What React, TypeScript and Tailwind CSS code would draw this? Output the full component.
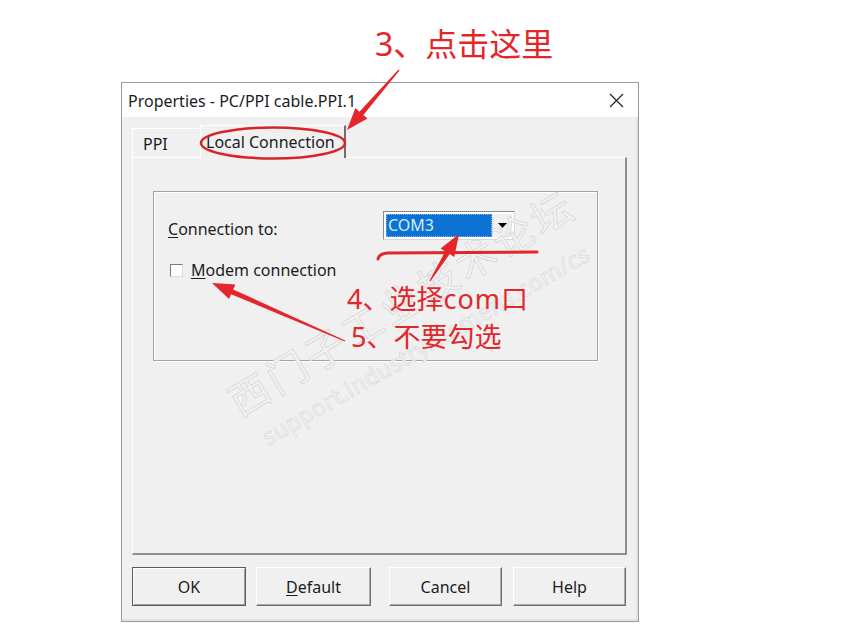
import React from 'react'

// 红色箭头：从尾部到箭头尖端，尾部细、靠近箭头处粗
function arrowPoints(tx: number, ty: number, hx: number, hy: number) {
  const len = Math.hypot(hx - tx, hy - ty)
  const dx = (hx - tx) / len
  const dy = (hy - ty) / len
  const nx = -dy
  const ny = dx
  const headLen = 22
  const bx = hx - dx * headLen
  const by = hy - dy * headLen
  const p = (x: number, y: number) => `${x.toFixed(1)},${y.toFixed(1)}`
  return [
    p(tx + nx * 0.6, ty + ny * 0.6),
    p(bx + nx * 2.6, by + ny * 2.6),
    p(bx + nx * 8, by + ny * 8),
    p(hx, hy),
    p(bx - nx * 8, by - ny * 8),
    p(bx - nx * 2.6, by - ny * 2.6),
    p(tx - nx * 0.6, ty - ny * 0.6),
  ].join(' ')
}

const RED = '#e3262b'

function Annotations() {
  return (
    <div className="absolute inset-0 z-20 pointer-events-none">
      <svg width="850" height="641" className="absolute left-0 top-0">
        {/* 水印 */}
        <g transform="rotate(-31 240 418)" fill="#f3f3f3" stroke="#d8d8d8" strokeWidth="0.8">
          <text x="240" y="418" fontSize="40" fontFamily="'Noto Sans CJK SC', sans-serif" letterSpacing="4">
            西门子工业技术论坛
          </text>
        </g>
        <g transform="rotate(-30 268 446)" fill="#f5f5f5" stroke="#dadada" strokeWidth="0.7">
          <text x="268" y="446" fontSize="23" fontFamily="'Noto Sans', sans-serif" letterSpacing="0.5">
            support.industry.siemens.com/cs
          </text>
        </g>

        {/* 椭圆圈 Local Connection */}
        <ellipse cx="273" cy="143" rx="72" ry="15.5" fill="none" stroke="#d8232a" strokeWidth="2.5" />

        {/* 下拉框下方的红线 */}
        <path d="M378 259 Q379 253.5 388 253 L537 252" fill="none" stroke={RED} strokeWidth="3" strokeLinecap="round" />

        <polygon points={arrowPoints(399, 70, 347, 130)} fill={RED} />
        <polygon points={arrowPoints(430, 281, 459, 234)} fill={RED} />
        <polygon points={arrowPoints(345, 341, 212, 283)} fill={RED} />
      </svg>

      <div
        className="absolute left-[375px] top-[28px] text-[32px] leading-none whitespace-nowrap"
        style={{ color: RED, fontFamily: "'Noto Sans', 'Noto Sans CJK SC', sans-serif" }}
      >
        3、点击这里
      </div>
      <div
        className="absolute left-[347px] top-[285px] text-[27px] leading-none whitespace-nowrap"
        style={{ color: RED, fontFamily: "'Noto Sans', 'Noto Sans CJK SC', sans-serif" }}
      >
        4、选择<span className="tracking-[1px]">com</span>口
      </div>
      <div
        className="absolute left-[351px] top-[323px] text-[27px] leading-none whitespace-nowrap"
        style={{ color: RED, fontFamily: "'Noto Sans', 'Noto Sans CJK SC', sans-serif" }}
      >
        5、不要勾选
      </div>
    </div>
  )
}

function Button({ children, wide, isDefault }: { children: React.ReactNode; wide: string; isDefault?: boolean }) {
  return (
    <div
      className={`${wide} h-[39px] flex items-center justify-center bg-[#f0f0f0] ${
        isDefault
          ? 'border border-[#5a5a5a] shadow-[inset_1px_1px_0_#ffffff,inset_-1px_-1px_0_#a0a0a0]'
          : 'border-t border-l border-white border-r border-b border-r-[#6f6f6f] border-b-[#6f6f6f] shadow-[inset_-1px_-1px_0_#a9a9a9]'
      }`}
    >
      {children}
    </div>
  )
}

export default function App() {
  return (
    <div
      className="relative w-[850px] h-[641px] bg-white overflow-hidden text-[16px] text-[#1c1c1c]"
      style={{ fontFamily: "'Noto Sans', 'Liberation Sans', sans-serif" }}
    >
      <div className="pt-[82px] pl-[121px]">
        {/* 对话框 */}
        <div className="w-[518px] h-[540px] border border-[#9c9c9c] bg-[#f0f0f0] flex flex-col shadow-[inset_-2px_-2px_0_#e2e2e2]">
          {/* 标题栏 */}
          <div className="h-[34px] bg-white flex items-center justify-between pl-[6px] pr-[14px]">
            <span className="pt-[1px]">Properties - PC/PPI cable.PPI.1</span>
            <svg width="15" height="15" viewBox="0 0 15 15">
              <path d="M1 1 L14 14 M14 1 L1 14" stroke="#222" strokeWidth="1.2" />
            </svg>
          </div>

          <div className="flex-1 flex flex-col pl-[10px] pr-[11px] pt-[8px]">
            {/* 选项卡 */}
            <div className="h-[32px] flex items-end">
              <div className="w-[68px] h-[29px] border-t border-l border-white flex items-center pl-[10px] pt-[1px]">
                PPI
              </div>
              <div className="relative z-10 -mb-px w-[146px] h-[33px] bg-[#f0f0f0] border-t border-l border-white border-r-2 border-r-[#6e6e6e] flex items-center pl-[5px]">
                Local Connection
              </div>
            </div>

            {/* 选项卡面板 */}
            <div className="h-[398px] border-t border-l border-white border-r-2 border-b-2 border-r-[#8e8e8e] border-b-[#8e8e8e] pl-[20px] pt-[33px]">
              <div className="w-[445px] h-[170px] border border-[#a3a3a3] shadow-[1px_1px_0_#ffffff,inset_1px_1px_0_#ffffff]">
                <div className="flex items-center pt-[17px] pl-[14px]">
                  <span className="w-[215px] pt-[8px]">
                    <span className="underline underline-offset-2">C</span>onnection to:
                  </span>
                  <div className="w-[132px] h-[29px] flex border border-t-[#8a8a8a] border-l-[#8a8a8a] border-r-[#d8d8d8] border-b-[#d8d8d8] bg-white p-[2px]">
                    <div className="flex-1 bg-[#0c72d4] border border-dotted border-[#7fb4e8] flex items-center pl-[1px] text-[#d4eaff]">
                      COM3
                    </div>
                    <div className="w-[20px] bg-[#f0f0f0] border-l border-[#e0e0e0] flex items-center justify-center">
                      <svg width="9" height="5" viewBox="0 0 9 5">
                        <path d="M0 0 H9 L4.5 5 Z" fill="#000" />
                      </svg>
                    </div>
                  </div>
                </div>
                <div className="flex items-center mt-[19px] pl-[16px] h-[20px]">
                  <div className="w-[13px] h-[13px] bg-white border border-t-[#7a7a7a] border-l-[#7a7a7a] border-r-[#dcdcdc] border-b-[#dcdcdc]" />
                  <span className="ml-[8px]">
                    <span className="underline underline-offset-2">M</span>odem connection
                  </span>
                </div>
              </div>
            </div>

            {/* 按钮 */}
            <div className="flex mt-[12px]">
              <Button wide="w-[114px]" isDefault>
                OK
              </Button>
              <div className="ml-[10px]">
                <Button wide="w-[115px]">
                  <span>
                    <span className="underline underline-offset-2">D</span>efault
                  </span>
                </Button>
              </div>
              <div className="ml-[18px]">
                <Button wide="w-[113px]">Cancel</Button>
              </div>
              <div className="ml-[11px]">
                <Button wide="w-[113px]">Help</Button>
              </div>
            </div>
          </div>
        </div>
      </div>

      <Annotations />
    </div>
  )
}
